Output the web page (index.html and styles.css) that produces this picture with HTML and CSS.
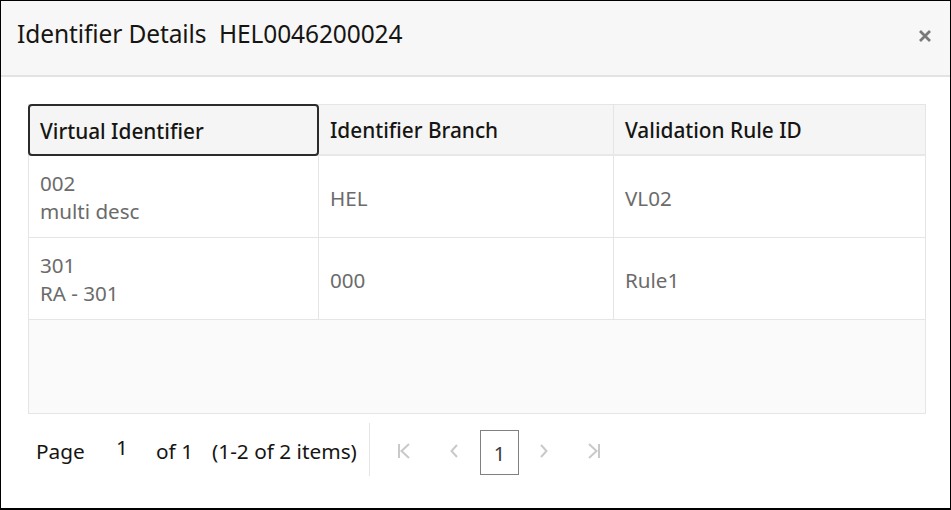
FILE: index.html
```html
<!DOCTYPE html>
<html>
<head>
<meta charset="utf-8">
<link rel="stylesheet" href="styles.css">
</head>
<body>
<div class="modal">
  <div class="header">
    <div class="title">Identifier Details&nbsp; HEL0046200024</div>
    <div class="close">
      <svg width="14" height="14" viewBox="0 0 14 14"><path d="M2 2 L12 12 M12 2 L2 12" stroke="#7a7a7a" stroke-width="2.8" stroke-linecap="butt"/></svg>
    </div>
  </div>
  <div class="content">
    <div class="table">
      <div class="row head">
        <div class="cell c1 focus">Virtual Identifier</div>
        <div class="cell c2">Identifier Branch</div>
        <div class="cell c3">Validation Rule ID</div>
      </div>
      <div class="row body">
        <div class="cell c1"><div>002</div><div>multi desc</div></div>
        <div class="cell c2">HEL</div>
        <div class="cell c3">VL02</div>
      </div>
      <div class="row body">
        <div class="cell c1"><div>301</div><div>RA - 301</div></div>
        <div class="cell c2">000</div>
        <div class="cell c3">Rule1</div>
      </div>
      <div class="empty"></div>
    </div>
    <div class="pager">
      <span class="lbl">Page</span>
      <span class="pnum">1</span>
      <span class="of">of 1</span>
      <span class="items">(1-2 of 2 items)</span>
      <span class="sep"></span>
      <span class="nav first">
        <svg width="14" height="18" viewBox="0 0 14 18"><path d="M2 2 V16 M12 2 L4.5 9 L12 16" fill="none" stroke="#c9c9c9" stroke-width="2"/></svg>
      </span>
      <span class="nav prev">
        <svg width="10" height="18" viewBox="0 0 10 18"><path d="M8 3 L2.5 9 L8 15" fill="none" stroke="#c9c9c9" stroke-width="2"/></svg>
      </span>
      <span class="cur">1</span>
      <span class="nav next">
        <svg width="10" height="18" viewBox="0 0 10 18"><path d="M2 3 L7.5 9 L2 15" fill="none" stroke="#c9c9c9" stroke-width="2"/></svg>
      </span>
      <span class="nav last">
        <svg width="14" height="18" viewBox="0 0 14 18"><path d="M12 2 V16 M2 2 L9.5 9 L2 16" fill="none" stroke="#c9c9c9" stroke-width="2"/></svg>
      </span>
    </div>
  </div>
</div>
</body>
</html>
```

FILE: styles.css
```css
html, body {
  margin: 0;
  padding: 0;
  background: #fff;
}
body {
  font-family: "Noto Sans", "Open Sans", sans-serif;
}
.modal {
  box-sizing: border-box;
  width: 951px;
  height: 510px;
  border: 1px solid #000;
  border-bottom-width: 2px;
  background: #fff;
  overflow: hidden;
}
.header {
  box-sizing: border-box;
  height: 76px;
  background: #f7f7f7;
  border-bottom: 2px solid #e3e3e3;
  display: flex;
  align-items: center;
  justify-content: space-between;
  padding: 0 18px 10px 16px;
}
.title {
  font-size: 24.5px;
  color: #161513;
  letter-spacing: -0.1px;
}
.close {
  display: flex;
  align-items: center;
  width: 14px;
  height: 14px;
  margin-top: 5px;
}
.content {
  padding: 27px 23px 0 27px;
}
.table {
  width: 898px;
  border: 1px solid #e5e5e5;
  box-sizing: border-box;
}
.row {
  display: flex;
  box-sizing: border-box;
}
.cell {
  box-sizing: border-box;
  display: flex;
  flex-direction: column;
  justify-content: center;
  padding: 0 11px;
  font-size: 20.6px;
}
.c1 { width: 290px; border-right: 1px solid #e5e5e5; }
.c2 { width: 295px; border-right: 1px solid #e5e5e5; }
.c3 { flex: 1; }
.head {
  height: 51px;
  background: #f5f5f5;
  color: #161513;
  font-weight: 500;
  border-bottom: 2px solid #e8e8e8;
}
.head .cell { padding-top: 1px; font-size: 20.8px; }
.focus {
  border: 2px solid #2b2b2b;
  border-radius: 4px;
  margin: -1px 0 -2px -1px;
  width: 291px;
  padding-left: 10px;
}
.body {
  height: 82px;
  color: #6b6b6b;
  border-bottom: 1px solid #e5e5e5;
  line-height: 28px;
}
.body .cell { padding-top: 2px; }
.body .c1 { padding-top: 0; }
.empty {
  height: 93px;
  background: #fafafa;
}
.pager {
  display: flex;
  align-items: center;
  height: 54px;
  margin-top: 10px;
  padding-left: 8px;
  font-size: 20.8px;
  color: #161513;
}
.lbl { width: 80px; }
.pnum { width: 40px; position: relative; top: -4px; }
.of { width: 56px; }
.items { width: 157px; }
.sep {
  width: 1px;
  height: 53px;
  align-self: flex-start;
  margin-top: -1px;
  background: #e5e5e5;
  margin-right: 27px;
}
.nav {
  display: flex;
  align-items: center;
  justify-content: center;
  width: 14px;
  height: 18px;
}
.first { margin-right: 38px; }
.prev { width: 10px; margin-right: 21px; }
.next { width: 10px; margin-left: 20px; margin-right: 38px; }
.cur {
  box-sizing: border-box;
  width: 39px;
  height: 45px;
  margin-top: 2px;
  border: 1px solid #808080;
  display: flex;
  align-items: center;
  justify-content: center;
  padding-top: 3px;
  font-size: 20px;
  color: #3a3a3a;
}
```
